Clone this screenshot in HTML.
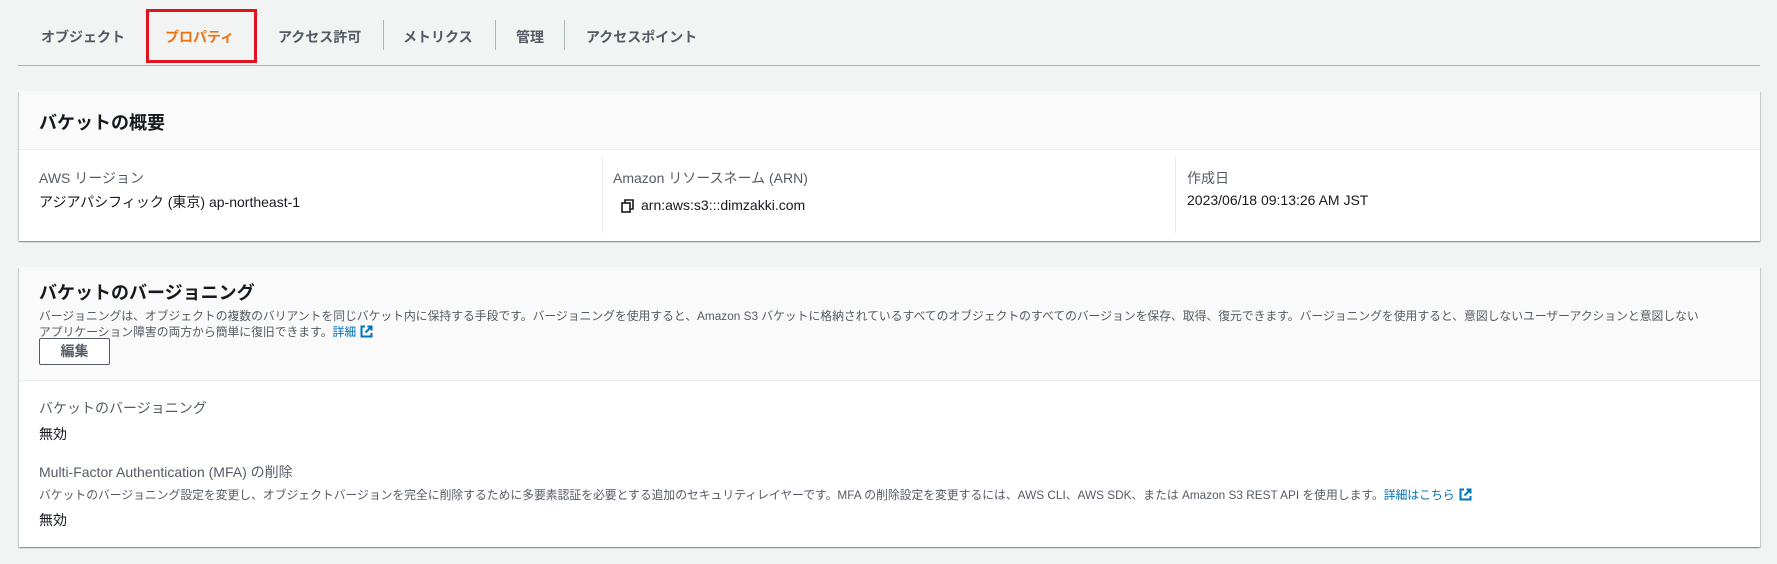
<!DOCTYPE html>
<html><head><meta charset="utf-8"><style>
*{margin:0;padding:0;box-sizing:border-box}
body{width:1777px;height:564px;background:#f2f3f3;font-family:"Liberation Sans","Noto Sans CJK JP",sans-serif;color:#16191f;position:relative;overflow:hidden}
.a{position:absolute;white-space:nowrap}
.tab{font-size:14px;font-weight:bold;color:#545b64;top:27px}
.div{position:absolute;top:20px;width:1px;height:30px;background:#aab7b8}
.card{position:absolute;left:19px;width:1741px;background:#fff;box-shadow:0 1px 1px 0 rgba(0,28,36,.3),1px 1px 1px 0 rgba(0,28,36,.15),-1px 1px 1px 0 rgba(0,28,36,.15)}
.hd{background:#fafafa;border-bottom:1px solid #eaeded;position:absolute;left:0;top:0;width:100%}
h2{font-size:18px;font-weight:bold}
.lbl{font-size:14px;color:#545b64}
.val{font-size:14px;color:#16191f}
.sm{font-size:11.8px;color:#545b64}
a{color:#0073bb;text-decoration:none}
.ext{display:inline-block;vertical-align:-2px;margin-left:4px}
</style></head><body>
<div class="a tab" style="left:41px">オブジェクト</div>
<div class="a tab" style="left:165px;color:#ec7211">プロパティ</div>
<div class="a" style="left:146px;top:9px;width:111px;height:54px;border:3px solid #e0141e"></div>
<div class="a tab" style="left:278px">アクセス許可</div>
<div class="div" style="left:383px"></div>
<div class="a tab" style="left:403px">メトリクス</div>
<div class="div" style="left:495px"></div>
<div class="a tab" style="left:516px">管理</div>
<div class="div" style="left:564px"></div>
<div class="a tab" style="left:586px">アクセスポイント</div>
<div class="a" style="left:18px;top:65px;width:1742px;height:1px;background:#aab7b8"></div>

<div class="card" style="top:91px;height:150px">
 <div class="hd" style="height:59px"><h2 class="a" style="left:20px;top:18px">バケットの概要</h2></div>
 <div class="a" style="left:583px;top:66px;width:1px;height:76px;background:#eaeded"></div>
 <div class="a" style="left:1156px;top:66px;width:1px;height:76px;background:#eaeded"></div>
 <div class="a lbl" style="left:20px;top:77px">AWS リージョン</div>
 <div class="a val" style="left:20px;top:101px">アジアパシフィック (東京) ap-northeast-1</div>
 <div class="a lbl" style="left:594px;top:77px">Amazon リソースネーム (ARN)</div>
 <svg class="a" style="left:602px;top:108px" width="14" height="14" viewBox="0 0 14 14"><rect x="1" y="4" width="8" height="9" fill="none" stroke="#16191f" stroke-width="1.6"/><path d="M4 4V1h8v9H9" fill="none" stroke="#16191f" stroke-width="1.6"/></svg>
 <div class="a val" style="left:622px;top:106px">arn:aws:s3:::dimzakki.com</div>
 <div class="a lbl" style="left:1168px;top:77px">作成日</div>
 <div class="a val" style="left:1168px;top:101px">2023/06/18 09:13:26 AM JST</div>
</div>

<div class="card" style="top:267px;height:280px">
 <div class="hd" style="height:114px">
  <h2 class="a" style="left:20px;top:12px">バケットのバージョニング</h2>
  <div class="a sm" style="left:20px;top:40px">バージョニングは、オブジェクトの複数のバリアントを同じバケット内に保持する手段です。バージョニングを使用すると、Amazon S3 バケットに格納されているすべてのオブジェクトのすべてのバージョンを保存、取得、復元できます。バージョニングを使用すると、意図しないユーザーアクションと意図しない</div>
  <div class="a sm" style="left:20px;top:56px">アプリケーション障害の両方から簡単に復旧できます。<a>詳細<svg class="ext" width="13" height="13" viewBox="0 0 13 13"><path d="M5 1.5H1.5v10h10V8M7.5 1.5h4v4M11.5 1.5 5.5 7.5" fill="none" stroke="#0073bb" stroke-width="2"/></svg></a></div>
  <div class="a" style="left:20px;top:71px;width:71px;height:27px;border:1px solid #545b64;border-radius:2px;background:#fff;font-size:14px;font-weight:bold;color:#545b64;text-align:center;line-height:25px">編集</div>
 </div>
 <div class="a lbl" style="left:20px;top:131px">バケットのバージョニング</div>
 <div class="a val" style="left:20px;top:157px">無効</div>
 <div class="a lbl" style="left:20px;top:195px">Multi-Factor Authentication (MFA) の削除</div>
 <div class="a sm" style="left:20px;top:219px">バケットのバージョニング設定を変更し、オブジェクトバージョンを完全に削除するために多要素認証を必要とする追加のセキュリティレイヤーです。MFA の削除設定を変更するには、AWS CLI、AWS SDK、または Amazon S3 REST API を使用します。<a>詳細はこちら<svg class="ext" width="13" height="13" viewBox="0 0 13 13"><path d="M5 1.5H1.5v10h10V8M7.5 1.5h4v4M11.5 1.5 5.5 7.5" fill="none" stroke="#0073bb" stroke-width="2"/></svg></a></div>
 <div class="a val" style="left:20px;top:243px">無効</div>
</div>
</body></html>
